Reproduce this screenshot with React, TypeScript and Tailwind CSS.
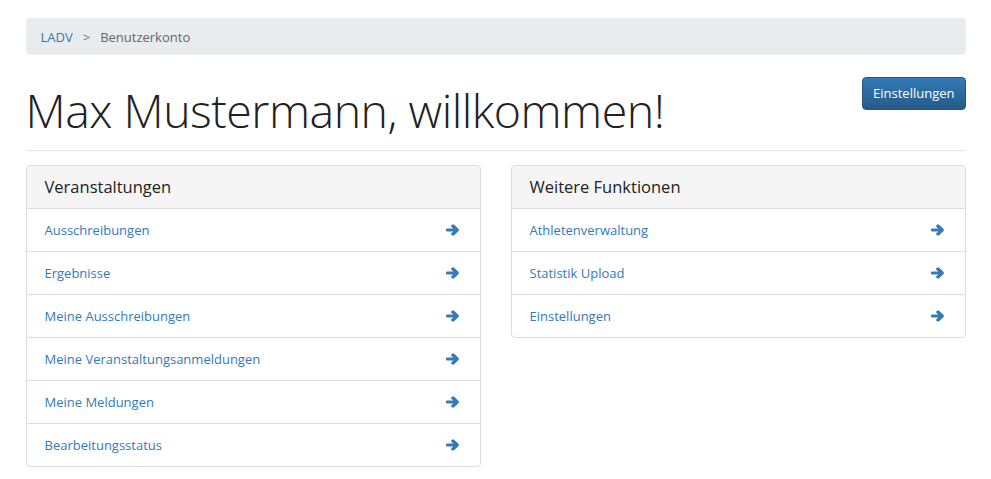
import React from "react";

const Arrow = () => (
  <svg width="13" height="12" viewBox="0 0 13 12" className="fill-[#337ab7]">
    <path d="M6.2 0.6 L7.9 0.6 L12.8 5.3 L12.8 6.7 L7.9 11.4 L6.2 11.4 L5.2 10.4 L5.2 9.2 L7.4 7.6 L0.8 7.6 L0 6.8 L0 5.2 L0.8 4.4 L7.4 4.4 L5.2 2.8 L5.2 1.6 Z" />
  </svg>
);

const Panel = ({ title, items }: { title: string; items: string[] }) => (
  <div className="border border-[#dddddd] rounded-[4px] bg-white overflow-hidden">
    <div className="h-[43px] bg-[#f5f5f5] border-b border-[#dddddd] flex items-center px-[18px] pt-[1px] text-[16.5px] text-[#222]">
      {title}
    </div>
    {items.map((it, i) => (
      <div
        key={it}
        className={`flex items-center justify-between pl-[18px] pr-[21px] ${i < items.length - 1 ? "h-[43px] border-b border-[#dddddd]" : "h-[42px]"}`}
      >
        <span className="text-[13px] text-[#337ab7] pt-[2px]">{it}</span>
        <Arrow />
      </div>
    ))}
  </div>
);

export default function App() {
  return (
    <div className="w-full bg-white min-h-[479px]" style={{ fontFamily: '"Open Sans", "Noto Sans", sans-serif' }}>
      <div className="w-[940px] mx-auto pt-[18px]">
        <div className="h-[37px] bg-[#e9ecef] rounded-[4px] flex items-center px-[15px] pt-[2px] text-[13px]">
          <span className="text-[#337ab7]">LADV</span>
          <span className="text-[#777] px-[10px]">&gt;</span>
          <span className="text-[#666]">Benutzerkonto</span>
        </div>
        <div className="flex justify-between items-start mt-[22px] border-b border-[#e5e5e5] pb-[11px]">
          <h1 className="text-[46.5px] font-light text-[#222] leading-[58px] tracking-[-0.5px] mt-[4px]">Max Mustermann, willkommen!</h1>
          <button className="h-[33px] px-[10px] rounded-[4px] text-white text-[13px] border border-[#245580] bg-gradient-to-b from-[#337ab7] to-[#265a88]">
            Einstellungen
          </button>
        </div>
        <div className="grid grid-cols-2 gap-[30px] mt-[14px]">
          <Panel
            title="Veranstaltungen"
            items={[
              "Ausschreibungen",
              "Ergebnisse",
              "Meine Ausschreibungen",
              "Meine Veranstaltungsanmeldungen",
              "Meine Meldungen",
              "Bearbeitungsstatus",
            ]}
          />
          <div>
            <Panel title="Weitere Funktionen" items={["Athletenverwaltung", "Statistik Upload", "Einstellungen"]} />
          </div>
        </div>
      </div>
    </div>
  );
}
